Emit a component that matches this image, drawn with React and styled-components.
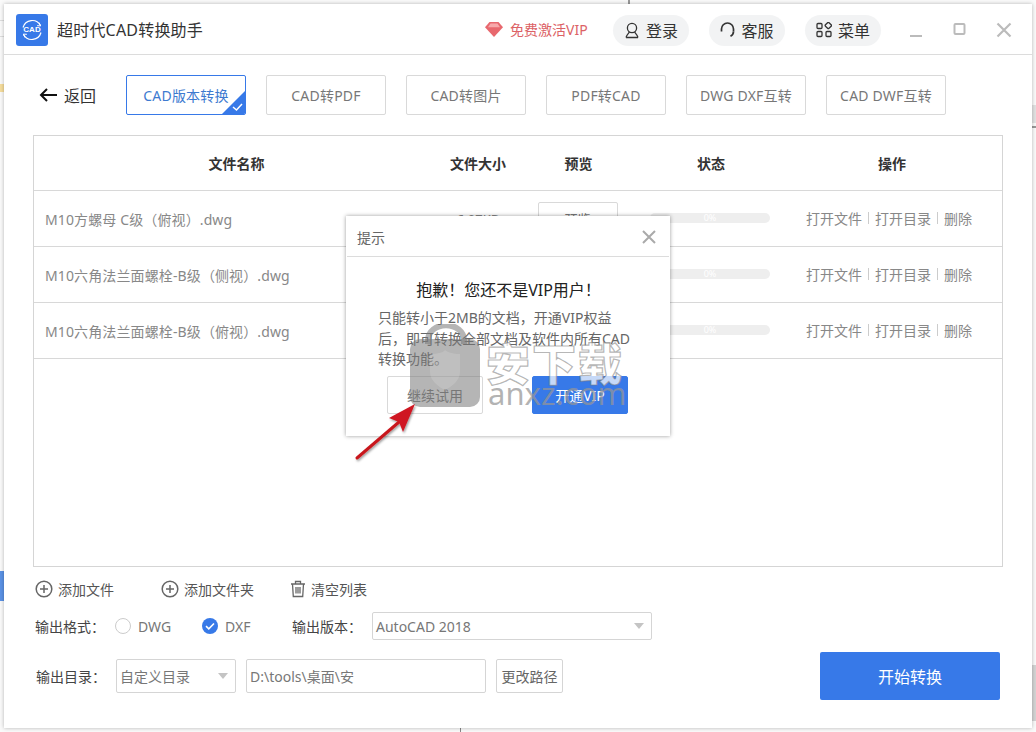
import React from "react";
import styled, { createGlobalStyle } from "styled-components";

const Global = createGlobalStyle`
  html, body { margin: 0; padding: 0; background: #fafafa; }
  #root { width: 1036px; height: 732px; overflow: hidden; position: relative; }
  * { box-sizing: border-box; }
  body { font-family: "Noto Sans", "Noto Sans CJK SC", sans-serif; font-size: 14px; color: #666; }
`;

const BLUE = "#3779e8";

const Page = styled.div`
  width: 1036px; height: 732px; padding: 4px; position: relative;
`;
const Sliver = styled.div`
  position: absolute;
  left: ${p => p.$x}px; top: ${p => p.$y}px; width: ${p => p.$w}px; height: ${p => p.$h}px;
  background: ${p => p.$c};
`;
const Window = styled.div`
  position: relative; width: 1028px; height: 724px; background: #fff;
  box-shadow: 0 0 4px rgba(0,0,0,.28);
  display: flex; flex-direction: column;
`;
const Header = styled.header`
  height: 51px; flex: none; border-bottom: 1px solid #dcdcdc;
  display: flex; align-items: center; padding: 0 0 0 12px;
`;
const Logo = styled.div`
  width: 32px; height: 32px; border-radius: 3px; background: ${BLUE};
  position: relative; display: flex; align-items: center; justify-content: center; margin-top: 1px;
`;
const LogoText = styled.span`
  font: 700 8px "Liberation Sans", sans-serif; color: #fff; position: absolute;
`;
const AppTitle = styled.div`
  margin-left: 9px; font-size: 16px; letter-spacing: .2px; color: #333; width: 428px; white-space: nowrap;
`;
const Vip = styled.div`
  display: flex; align-items: center; gap: 7px; color: #dc6266; font-size: 14px; width: 128px; white-space: nowrap;
`;
const Pill = styled.div`
  width: 76px; height: 31px; border-radius: 16px; background: #f2f3f4; color: #333; font-size: 16px;
  display: flex; align-items: center; justify-content: center; gap: 6px; margin-right: 20px; margin-top: 2px;
`;
const WinButtons = styled.div`
  display: flex; align-items: center; margin-left: 7px; gap: 28px; margin-top: 2px;
`;
const TabRow = styled.nav`
  height: 80px; flex: none; display: flex; align-items: center; padding: 0 0 0 35px;
`;
const Back = styled.div`
  display: flex; align-items: center; gap: 7px; font-size: 16px; color: #333; width: 87px;
`;
const Tabs = styled.div`display: flex; gap: 20px;`;
const Tab = styled.div`
  position: relative; width: 120px; height: 40px; border-radius: 2px;
  border: 1px solid ${p => p.$active ? BLUE : "#d9d9d9"};
  color: ${p => p.$active ? "#3d7ad0" : "#777"}; font-size: 14px; letter-spacing: .2px;
  display: flex; align-items: center; justify-content: center; white-space: nowrap; overflow: hidden;
`;
const Corner = styled.svg`position: absolute; right: -1px; bottom: -1px;`;
const Table = styled.section`
  margin: 0 29px; height: 432px; flex: none; border: 1px solid #d5d5d5;
`;
const Row = styled.div`
  display: grid; grid-template-columns: 405px 78px 123px 142px 1fr;
  height: ${p => p.$head ? 55 : 56}px; align-items: center; border-bottom: 1px solid #d8d8d8;
`;
const HeadCell = styled.div`
  text-align: center; font-weight: 700; font-size: 14px; color: #333; padding-bottom: 1px;
`;
const NameCell = styled.div`
  padding-left: 11px; color: #888; font-size: 14px; letter-spacing: .12px; white-space: nowrap; padding-top: 1px;
`;
const SizeCell = styled.div`text-align: center; color: #888; font-size: 13px;`;
const PreviewCell = styled.div`display: flex; justify-content: center; padding-right: 2px;`;
const PreviewBtn = styled.div`
  width: 80px; height: 34px; border: 1px solid #d9d9d9; border-radius: 2px; color: #777;
  display: flex; align-items: center; justify-content: center; font-size: 13px;
`;
const Progress = styled.div`
  width: 120px; height: 10px; border-radius: 5px; background: #eeeeee; margin-left: 10px;
  color: #fff; font-size: 9px; line-height: 10px; text-align: center; margin-bottom: 2px;
`;
const Ops = styled.div`
  display: flex; justify-content: center; align-items: center; color: #888; font-size: 14px; gap: 6px; padding-bottom: 1px;
  padding-right: 6px;
`;
const Sep = styled.i`display: block; width: 1px; height: 12px; background: #ccc;`;
const Actions = styled.div`
  display: flex; align-items: center; height: 22px; margin-top: 11px; padding-left: 31px; color: #555; font-size: 14px;
`;
const Action = styled.div`
  display: flex; align-items: center; gap: 5px; width: ${p => p.$w}px; white-space: nowrap;
`;
const FormatRow = styled.div`
  display: flex; align-items: center; height: 28px; margin-top: 12px; padding-left: 31px; color: #444; font-size: 14px;
`;
const Label = styled.span`color: #444; font-size: 14px; white-space: nowrap; width: ${p => p.$w}px;`;
const RadioItem = styled.div`
  display: flex; align-items: center; gap: 7px; color: #777; width: ${p => p.$w}px;
`;
const Ring = styled.span`
  width: 16px; height: 16px; border-radius: 50%; border: 1px solid #ccc; display: block;
`;
const Select = styled.div`
  width: ${p => p.$w}px; height: ${p => p.$h}px; border: 1px solid #d5d5d5; border-radius: 2px; flex: none;
  display: flex; align-items: center; justify-content: space-between; padding: 0 7px 0 ${p => p.$pl}px;
  color: #777; font-size: 14px; white-space: nowrap; position: relative;
`;
const Caret = styled.i`
  display: block; width: 0; height: 0; border-left: 5px solid transparent; border-right: 5px solid transparent;
  border-top: 6px solid #c4c4c4;
`;
const PathRow = styled.div`
  display: flex; align-items: flex-start; height: 48px; margin-top: 12px; padding-left: 32px;
`;
const PathInner = styled.div`
  display: flex; align-items: center; height: 34px; margin-top: 7px;
`;
const Input = styled.div`
  width: 240px; height: 34px; border: 1px solid #d5d5d5; border-radius: 2px; margin-left: 10px;
  display: flex; align-items: center; padding-left: 3px; color: #777; font-size: 14px; white-space: nowrap;
`;
const SmallBtn = styled.div`
  width: 67px; height: 34px; border: 1px solid #d5d5d5; border-radius: 2px; margin-left: 10px;
  display: flex; align-items: center; justify-content: center; color: #666; font-size: 14px;
`;
const Start = styled.div`
  width: 180px; height: 48px; background: ${BLUE}; border-radius: 2px; color: #fff; font-size: 16px;
  display: flex; align-items: center; justify-content: center; margin-left: 257px;
`;

const Modal = styled.div`
  position: absolute; left: 342px; top: 212px; width: 324px; height: 220px; background: #fff;
  box-shadow: 0 0 4px rgba(0,0,0,.4); display: flex; flex-direction: column;
`;
const ModalHead = styled.div`
  height: 41px; margin: 0 1px; border-bottom: 1px solid #dcdcdc; flex: none;
  display: flex; align-items: center; justify-content: space-between; padding: 2px 13px 0 10px;
  color: #666; font-size: 14px;
`;
const ModalTitle = styled.h2`
  margin: 22px 0 0; font-weight: 400; font-size: 16px; line-height: 22px; color: #222; text-align: center; padding-left: 1px;
`;
const ModalBody = styled.p`
  margin: 7px 0 0; padding-left: 32px; font-size: 14px; line-height: 20.5px; color: #666; white-space: nowrap;
`;
const ModalBtns = styled.div`display: flex; gap: 49px; padding-left: 41px; margin-top: 6px;`;
const GhostBtn = styled.div`
  width: 96px; height: 38px; border: 1px solid #d9d9d9; border-radius: 2px; color: #777; font-size: 14px;
  display: flex; align-items: center; justify-content: center;
`;
const PrimaryBtn = styled(GhostBtn)`background: ${BLUE}; border-color: ${BLUE}; color: #fff;`;

const Watermark = styled.div`
  position: absolute; left: 406px; top: 320px; width: 226px; height: 90px; pointer-events: none;
`;
const LockSvg = styled.svg`position: absolute; left: 0; top: 0;`;
const WmCn = styled.div`
  position: absolute; left: 76px; top: 7px; font-family: "Noto Sans CJK SC", sans-serif; font-weight: 900; font-size: 44px; line-height: 62px;
  letter-spacing: 2px; color: rgba(255,255,255,.72); -webkit-text-stroke: 1.2px rgba(120,120,120,.55); white-space: nowrap;
`;
const WmEn = styled.div`
  position: absolute; left: 78px; top: 50px; font-family: "Noto Sans", sans-serif; font-size: 31px; line-height: 38px;
  color: rgba(150,150,150,.72); white-space: nowrap;
`;
const Arrow = styled.svg`position: absolute; left: 345px; top: 396px; pointer-events: none;`;

const Plus = () => (
  <svg width="18" height="18" viewBox="0 0 18 18" fill="none" stroke="#666" strokeWidth="1.5">
    <circle cx="9" cy="9" r="7.8" /><path d="M9 5v8M5 9h8" />
  </svg>
);

const COLON = "\uFF1A";
const BANG = "\uFF01";
const COMMA = "\uFF0C";
const LP = "\uFF08";
const RP = "\uFF09";

const rows = [
  `M10方螺母 C级${LP}俯视${RP}.dwg`,
  `M10六角法兰面螺栓-B级${LP}侧视${RP}.dwg`,
  `M10六角法兰面螺栓-B级${LP}俯视${RP}.dwg`,
];
const tabs = ["CAD转PDF", "CAD转图片", "PDF转CAD", "DWG DXF互转", "CAD DWF互转"];

export default function App() {
  return (
    <Page>
      <Global />
      <Sliver $x={0} $y={20} $w={4} $h={1} $c="#ddd" />
      <Sliver $x={0} $y={36} $w={4} $h={1} $c="#ddd" />
      <Sliver $x={0} $y={84} $w={4} $h={8} $c="#f6dd9c" />
      <Sliver $x={0} $y={571} $w={4} $h={30} $c="#5b92e6" />
      <Sliver $x={628} $y={0} $w={2} $h={4} $c="#999" />
      <Sliver $x={1032} $y={105} $w={4} $h={18} $c="#e2e2e2" />
      <Sliver $x={1032} $y={126} $w={4} $h={2} $c="#999" />
      <Sliver $x={1032} $y={665} $w={4} $h={56} $c="#d4d4d4" />
      <Sliver $x={460} $y={728} $w={1} $h={4} $c="#888" />
      <Window>
        <Header>
          <Logo>
            <svg width="24" height="24" viewBox="0 0 24 24" fill="none" stroke="#fff" strokeWidth="1.2">
              <path d="M3 9.5A9.5 9.5 0 0 1 20.5 7.5M21 14.5A9.5 9.5 0 0 1 3.5 16.5" />
              <path d="M19 4.5l1.7 3.4-3.6-.2M5 19.5l-1.7-3.4 3.6.2" strokeWidth="1" />
            </svg>
            <LogoText>CAD</LogoText>
          </Logo>
          <AppTitle>超时代CAD转换助手</AppTitle>
          <Vip>
            <svg width="18" height="16" viewBox="0 0 18 16">
              <path d="M4.5 1h9L18 6.2 9 16 0 6.2z" fill="#e8686e" />
              <path d="M5.5 2.5h7L15 6.2H3z" fill="#f7a9ab" />
            </svg>
            免费激活VIP
          </Vip>
          <Pill>
            <svg width="16" height="17" viewBox="0 0 16 17" fill="none" stroke="#333" strokeWidth="1.3">
              <circle cx="8" cy="6" r="4.6" /><path d="M2 15.5c1-3 3-4.5 3.4-5.4M14 15.5c-1-3-3-4.500-3.400-5.400M2 15.500h12" />
            </svg>
            登录
          </Pill>
          <Pill>
            <svg width="15" height="16" viewBox="0 0 15 16" fill="none" stroke="#333" strokeWidth="1.700">
              <path d="M1.500 9.500V7a6 6 0 0 1 12 0v2.500" /><path d="M13.500 9.500c0 2.500-1.500 4-3 4.800" />
            </svg>
            客服
          </Pill>
          <Pill>
            <svg width="16" height="16" viewBox="0 0 16 16" fill="none" stroke="#333" strokeWidth="1.300">
              <rect x="1" y="1.500" width="5" height="5" rx="1" />
              <rect x="9.800" y="1" width="5" height="5" rx="1" transform="rotate(45 12.300 3.500)" />
              <rect x="1" y="9.500" width="5" height="5" rx="1" />
              <rect x="10" y="9.500" width="5" height="5" rx="1" />
            </svg>
            菜单
          </Pill>
          <WinButtons>
            <svg width="16" height="16" viewBox="0 0 16 16" stroke="#bbb" strokeWidth="2"><path d="M2 14h12" /></svg>
            <svg width="16" height="16" viewBox="0 0 16 16" fill="none" stroke="#bbb" strokeWidth="2"><rect x="2.500" y="2" width="10" height="10" rx="1" /></svg>
            <svg width="16" height="16" viewBox="0 0 16 16" stroke="#bbb" strokeWidth="2.200"><path d="M1.500 1.500l13 13M14.500 1.500l-13 13" /></svg>
          </WinButtons>
        </Header>

        <TabRow>
          <Back>
            <svg width="18" height="14" viewBox="0 0 18 14" fill="none" stroke="#111" strokeWidth="2"><path d="M18 7H2M8 1 2 7l6 6" /></svg>
            返回
          </Back>
          <Tabs>
            <Tab $active>
              CAD版本转换
              <Corner width="25" height="25" viewBox="0 0 25 25">
                <path d="M25 0v23a2 2 0 0 1-2 2H0z" fill={BLUE} />
                <path d="M12 17l3.500 3 5.500-6" fill="none" stroke="#fff" strokeWidth="1.500" />
              </Corner>
            </Tab>
            {tabs.map(t => <Tab key={t}>{t}</Tab>)}
          </Tabs>
        </TabRow>

        <Table>
          <Row $head>
            <HeadCell>文件名称</HeadCell>
            <HeadCell>文件大小</HeadCell>
            <HeadCell>预览</HeadCell>
            <HeadCell>状态</HeadCell>
            <HeadCell>操作</HeadCell>
          </Row>
          {rows.map(name => (
            <Row key={name}>
              <NameCell>{name}</NameCell>
              <SizeCell>6.07KB</SizeCell>
              <PreviewCell><PreviewBtn>预览</PreviewBtn></PreviewCell>
              <Progress>0%</Progress>
              <Ops>打开文件<Sep />打开目录<Sep />删除</Ops>
            </Row>
          ))}
        </Table>

        <Actions>
          <Action $w={126}><Plus />添加文件</Action>
          <Action $w={129}><Plus />添加文件夹</Action>
          <Action $w={90}>
            <svg width="16" height="18" viewBox="0 0 16 18" fill="none" stroke="#666" strokeWidth="1.300">
              <path d="M1 4h14M5.500 4V1.500h5V4M2.500 4l.8 12.500h9.400L13.500 4M6 7v6.500M8 7v6.500M10 7v6.500" />
            </svg>
            清空列表
          </Action>
        </Actions>

        <FormatRow>
          <Label $w={80}>{`输出格式${COLON}`}</Label>
          <RadioItem $w={87}><Ring />DWG</RadioItem>
          <RadioItem $w={90}>
            <svg width="16" height="16" viewBox="0 0 16 16">
              <circle cx="8" cy="8" r="8" fill={BLUE} />
              <path d="M4 8.200l2.800 2.600L12 5.500" fill="none" stroke="#fff" strokeWidth="1.600" />
            </svg>
            DXF
          </RadioItem>
          <Label $w={80}>{`输出版本${COLON}`}</Label>
          <Select $w={280} $h={28} $pl={3}>AutoCAD 2018<Caret /></Select>
        </FormatRow>

        <PathRow>
          <PathInner>
            <Label $w={80}>{`输出目录${COLON}`}</Label>
            <Select $w={120} $h={34} $pl={3}>自定义目录<Caret /></Select>
            <Input>D:\tools\桌面\安</Input>
            <SmallBtn>更改路径</SmallBtn>
          </PathInner>
          <Start>开始转换</Start>
        </PathRow>

        <Modal>
          <ModalHead>
            提示
            <svg width="14" height="14" viewBox="0 0 14 14" stroke="#aaa" strokeWidth="2"><path d="M1 1l12 12M13 1 1 13" /></svg>
          </ModalHead>
          <ModalTitle>{`抱歉${BANG}您还不是VIP用户${BANG}`}</ModalTitle>
          <ModalBody>
            {`只能转小于2MB的文档${COMMA}开通VIP权益`}<br />
            {`后${COMMA}即可转换全部文档及软件内所有CAD`}<br />
            转换功能。
          </ModalBody>
          <ModalBtns>
            <GhostBtn>继续试用</GhostBtn>
            <PrimaryBtn>开通VIP</PrimaryBtn>
          </ModalBtns>
        </Modal>

        <Watermark>
          <LockSvg width="72" height="86" viewBox="0 0 72 86">
            <path d="M18 20V16a17 14 0 0 1 36 0v4" fill="none" stroke="rgba(120,120,120,.55)" strokeWidth="6" />
            <rect x="0" y="15" width="70" height="68" rx="10" fill="rgba(120,120,120,.55)" />
            <path d="M20 30c8 0 14-2 15-4 2 2 8 4 15 4v18c0 9-9 15-15 18-6-3-15-9-15-18z" fill="rgba(255,255,255,.14)" />
          </LockSvg>
          <WmCn>安下载</WmCn>
          <WmEn>anxz.com</WmEn>
        </Watermark>

        <Arrow width="80" height="66" viewBox="0 0 80 66">
          <defs>
            <filter id="as" x="-20%" y="-20%" width="140%" height="140%"><feDropShadow dx="1" dy="1.500" stdDeviation="1.200" floodColor="#000" floodOpacity=".4" /></filter>
          </defs>
          <g filter="url(#as)">
            <path d="M8 58 50 22" stroke="#c8161d" strokeWidth="3" strokeLinecap="round" />
            <path d="M66 4 40 18 50 22 54 32z" fill="#cf1820" />
          </g>
        </Arrow>
      </Window>
    </Page>
  );
}
